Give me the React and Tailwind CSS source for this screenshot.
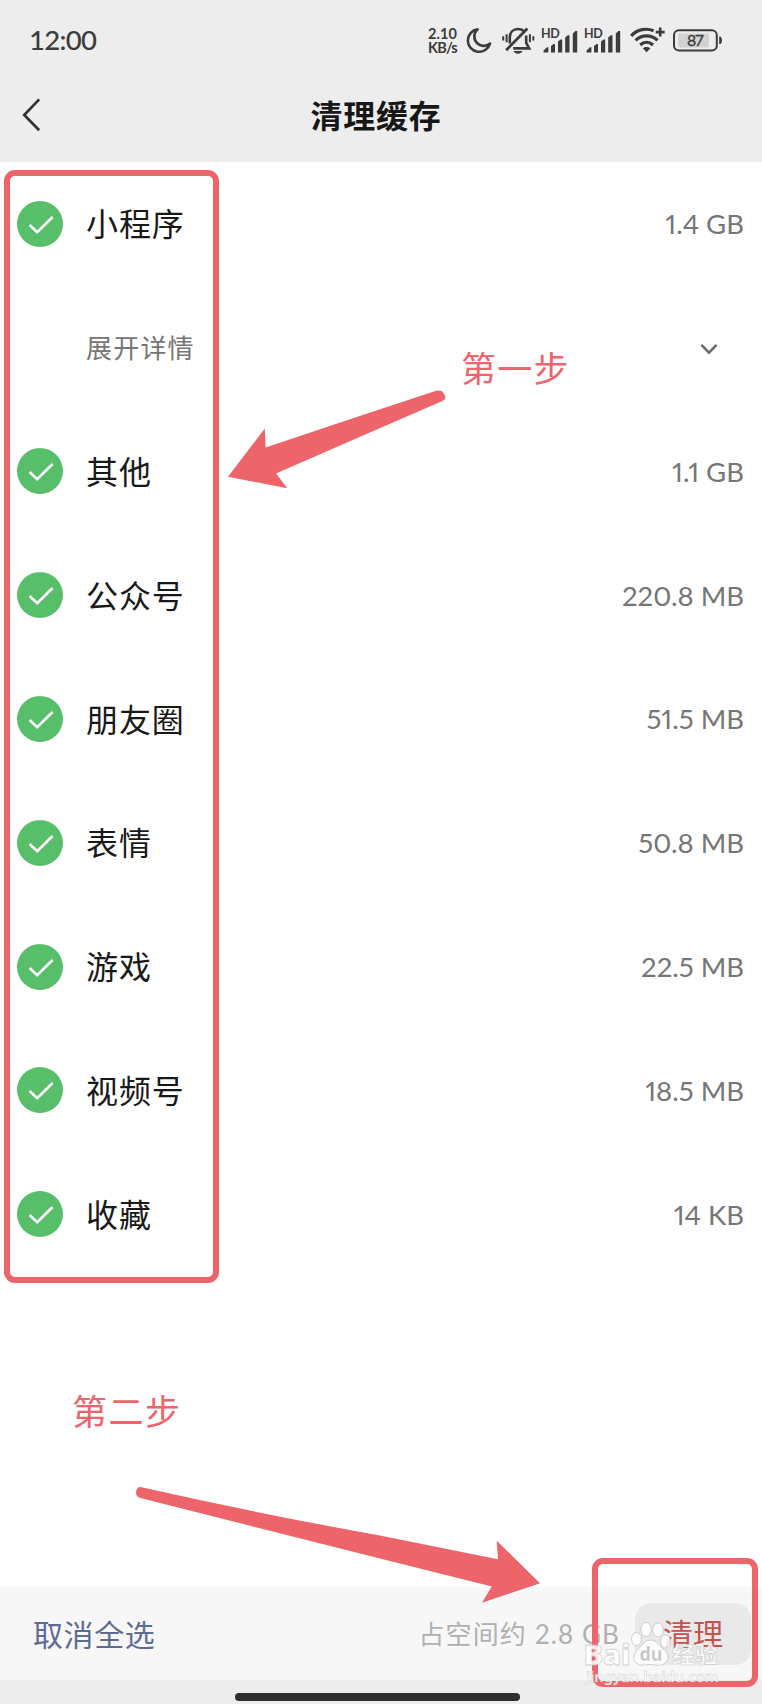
import React, { useState } from 'react';

const cacheItems = [
  { id: 'mini', name: '小程序', size: '1.4 GB', expandable: true },
  { id: 'other', name: '其他', size: '1.1 GB' },
  { id: 'official', name: '公众号', size: '220.8 MB' },
  { id: 'moments', name: '朋友圈', size: '51.5 MB' },
  { id: 'sticker', name: '表情', size: '50.8 MB' },
  { id: 'game', name: '游戏', size: '22.5 MB' },
  { id: 'channels', name: '视频号', size: '18.5 MB' },
  { id: 'favorites', name: '收藏', size: '14 KB' },
];

const MoonIcon = () => (
  <svg width="26" height="27" viewBox="0 0 26 27" fill="none" stroke="#3c3c3c" strokeWidth="2.6" strokeLinejoin="round">
    <path d="M11.6 2.3 A11.3 11.3 0 1 0 24 16.6 A8.8 8.8 0 0 1 11.6 2.3 Z" />
  </svg>
);

const MutedBellIcon = () => (
  <svg width="33" height="28" viewBox="0 0 33 28" fill="none" stroke="#3c3c3c" strokeWidth="2.6">
    <path d="M7.8 16.5 V10.6 C7.8 5.6 11 2 16 2 C18.2 2 20.2 2.7 21.8 4" />
    <path d="M24.2 8.4 V16 L27.2 21.4 H11.2" />
    <path d="M4.2 23.2 L25.4 1.6" strokeWidth="2.8" />
    <path d="M4.6 7.2 V15.2 M1.2 9.2 V13.4 M27.9 7.2 V15.2 M31.3 9.2 V13.4" strokeWidth="2" />
    <path d="M11.5 24 H20.5 C19 27.6 13 27.6 11.5 24 Z" fill="#3c3c3c" stroke="none" />
  </svg>
);

const SignalIcon = () => (
  <div className="relative h-[26px] w-[37px]">
    <span className="absolute -top-[2px] -left-px text-[12.5px] leading-[14px] font-bold tracking-[-0.4px]">HD</span>
    <svg width="37" height="26" viewBox="0 0 37 26" fill="#3c3c3c">
      <path d="M1.6 23.6 V21.6 L5 18.2 H6.4 V23.6 Z" />
      <path d="M9 23.6 V17 L11.6 15 H13 V23.6 Z" />
      <path d="M16 23.6 V12.6 L18.6 10.4 H20.2 V23.6 Z" />
      <path d="M23.2 23.6 V8.6 L25.8 6.2 H27.5 V23.6 Z" />
      <path d="M30.8 23.6 V4.4 L33.4 2 H35.2 V23.6 Z" />
    </svg>
  </div>
);

const WifiIcon = () => (
  <svg width="36" height="26" viewBox="0 0 36 26" fill="none" stroke="#3c3c3c" strokeWidth="3.2">
    <path d="M1.2 8.8 C7.4 2 16.6 0.8 23.6 3.8" />
    <path d="M5.6 13.4 C11.6 7.4 21.2 7.4 27.6 13.4" />
    <path d="M10.2 18 C14 14.6 19.2 14.6 23 18" />
    <path d="M16.6 25.2 L12.9 21.4 C15 19.6 18.2 19.6 20.3 21.4 Z" fill="#3c3c3c" stroke="none" />
    <path d="M30.2 0.6 V9.6 M25.7 5.1 H34.7" strokeWidth="2.6" />
  </svg>
);

const BatteryIcon = () => (
  <svg width="50" height="24" viewBox="0 0 50 24">
    <rect x="1" y="1.2" width="42.8" height="20.4" rx="5" fill="none" stroke="#3c3c3c" strokeWidth="2" />
    <rect x="5" y="4.4" width="31" height="14" rx="2" fill="#d2d2d2" />
    <path d="M46.2 7.6 H47.4 Q49 8.6 49 11.3 Q49 14 47.4 15 H46.2 Z" fill="#3c3c3c" />
    <text x="22.6" y="17.2" textAnchor="middle" fontSize="16" stroke="#3c3c3c" strokeWidth="0.3" fill="#3c3c3c" textLength="17">87</text>
  </svg>
);

const StatusBar = () => (
  <div className="flex h-[81px] items-start justify-between pl-[29px] pr-[39px] text-[#3c3c3c]">
    <span className="mt-[23px] text-[27.5px] leading-[34px] font-medium tracking-[-0.7px]">12:00</span>
    <div className="flex items-start pt-[27px]">
      <div className="mr-[9px] w-[29px] text-[14.5px] leading-[14px] font-bold whitespace-nowrap">
        <p className="tracking-[0.1px]">2.10</p>
        <p className="tracking-[-0.8px]">KB/s</p>
      </div>
      <div className="mr-[10px]"><MoonIcon /></div>
      <div className="mr-[7px]"><MutedBellIcon /></div>
      <div className="mt-[2px] mr-[6px]"><SignalIcon /></div>
      <div className="mt-[2px] mr-[8px]"><SignalIcon /></div>
      <div className="mr-[7px]"><WifiIcon /></div>
      <div className="mt-[2px]"><BatteryIcon /></div>
    </div>
  </div>
);

const TitleBar = () => (
  <div className="grid h-[81px] grid-cols-[1fr_auto_1fr] items-start pr-[32px] pl-[22px]">
    <button className="mt-[16px]" aria-label="返回">
      <svg width="20" height="36" viewBox="0 0 20 36" fill="none" stroke="#333" strokeWidth="2.7">
        <path d="M17.2 2.4 L2.2 18 L17.2 33.2" />
      </svg>
    </button>
    <h1 className="mt-[12px] text-[32px] leading-[46px] font-bold tracking-[0.8px] text-[#171717]">清理缓存</h1>
  </div>
);

const CheckCircle = ({ checked, onClick }) => (
  <button onClick={onClick} className="flex size-[46px] items-center justify-center rounded-full bg-[#57be6a]">
    {checked && (
      <svg width="26" height="20" viewBox="0 0 26 20" className="mt-[2px] ml-px" fill="none" stroke="#fff" strokeWidth="2.7">
        <path d="M1.6 10 L9.2 17.2 L24.6 2" />
      </svg>
    )}
  </button>
);

const CacheRow = ({ item, checked, onToggle }) => (
  <>
    <li className="flex h-[123.8px] items-center pr-[18px] pl-[17px]">
      <CheckCircle checked={checked} onClick={onToggle} />
      <span className="ml-[23px] pt-px text-[32px] tracking-[0.9px] text-[#191919]">{item.name}</span>
      <span className="ml-auto text-[27.5px] text-[#767676] proportional-nums">{item.size}</span>
    </li>
    {item.expandable && (
      <li className="flex h-[123.8px] items-center justify-between pt-[2px] pr-[44px] pl-[86px]">
        <span className="text-[26px] tracking-[1.2px] text-[#767676]">展开详情</span>
        <svg width="18" height="12" viewBox="0 0 18 12" fill="none" stroke="#6b6b6b" strokeWidth="2.5">
          <path d="M1.4 1.8 L9 9.6 L16.6 1.8" />
        </svg>
      </li>
    )}
  </>
);

const BottomBar = ({ onToggleAll }) => (
  <div className="flex h-[93px] items-center bg-[#f7f7f7] pr-[11px] pl-[33px]">
    <button onClick={onToggleAll} className="pt-[2px] text-[30px] tracking-[0.6px] text-[#5d6c93]">取消全选</button>
    <span className="ml-auto pt-[2px] text-[26px] tracking-[1.1px] text-[#b0b0b0]">占空间约 2.8 GB</span>
    <button className="ml-[15px] h-[62px] w-[116px] rounded-2xl bg-[#e9e9e9] text-[30px] text-[#c4534f]">清理</button>
  </div>
);

// Hand drawn marks that explain the two steps
const Annotations = () => (
  <div className="pointer-events-none absolute inset-0">
    <div className="absolute top-[170px] left-[4px] h-[1113px] w-[215px] rounded-[11px] border-6 border-[#ed646b]" />
    <div className="absolute top-[1558px] left-[592px] h-[129px] w-[166px] rounded-[11px] border-6 border-[#ed646b]" />
    <span className="absolute top-[343px] left-[461px] text-[35px] leading-[50px] tracking-[1.2px] whitespace-nowrap text-[#ed646b]">第一步</span>
    <span className="absolute top-[1386px] left-[72px] text-[35px] leading-[50px] tracking-[1.5px] whitespace-nowrap text-[#ed646b]">第二步</span>
    <svg className="absolute inset-0" width="762" height="1704" viewBox="0 0 762 1704" fill="#ed646b">
      <path d="M228 476.7 L264.8 428.5 L265.6 447.4 Q350 419 434.7 391.2 Q441 389.2 443.5 393 Q447 398 444 400 Q442 401.4 437.8 403 Q357 438 276 473.5 L287.4 488.3 Z" />
      <path d="M540 1583.3 L496.7 1540.7 L498 1559.3 L381 1535.7 Q260 1514 140.5 1487 Q137.5 1486.6 136.3 1491 Q134.5 1496.5 142.5 1498.6 L381 1558.8 L491.8 1586.6 L482 1602.7 Z" />
    </svg>
  </div>
);

const Watermark = () => (
  <svg
    className="pointer-events-none absolute top-[1610px] left-[580px]"
    width="150"
    height="84"
    viewBox="0 0 150 84"
    fill="#fff"
    fillOpacity="0.85"
    stroke="#c4c4c4"
    strokeOpacity="0.8"
    strokeWidth="1"
    fontFamily='"Noto Sans", "Noto Sans CJK SC", sans-serif'
  >
    <text x="3.5" y="54.5" fontSize="29" fontWeight="900" strokeWidth="0.8" textLength="47" lengthAdjust="spacingAndGlyphs">Bai</text>
    <ellipse cx="56.5" cy="29" rx="5" ry="6.6" />
    <ellipse cx="66" cy="19.5" rx="5.2" ry="7" />
    <ellipse cx="78" cy="20" rx="5.2" ry="7" />
    <ellipse cx="85.5" cy="31.5" rx="5" ry="6.6" />
    <path d="M71 30 C77 30 79 36 83 39 C89 43 90 50 84 54 C79 56.5 75 54.5 70 54.5 C65 54.5 61 56.5 56 53 C52 49 54 43 58 39 C63 35 65 30 71 30 Z" />
    <text x="59.5" y="51" fontSize="20" fontWeight="700" fill="#b8b8b8" stroke="#fff" strokeWidth="0.4" textLength="23" lengthAdjust="spacingAndGlyphs">du</text>
    <text x="92" y="53" fontSize="23" fontWeight="700" strokeWidth="0.6" textLength="46" lengthAdjust="spacingAndGlyphs">经验</text>
    <text x="6" y="72" fontSize="15" fontWeight="600" strokeWidth="0.5" textLength="133" lengthAdjust="spacingAndGlyphs">jingyan.baidu.com</text>
  </svg>
);

export default function App() {
  const [selected, setSelected] = useState(cacheItems.map((item) => item.id));

  const toggle = (id) => {
    setSelected((prev) => (prev.includes(id) ? prev.filter((s) => s !== id) : [...prev, id]));
  };

  const toggleAll = () => {
    setSelected((prev) => (prev.length ? [] : cacheItems.map((item) => item.id)));
  };

  return (
    <div className="relative flex h-[1704px] w-[762px] flex-col overflow-hidden bg-white font-['Lato','Noto_Sans_CJK_SC',sans-serif]">
      <header className="bg-[#ededed]">
        <StatusBar />
        <TitleBar />
      </header>

      <ul className="flex-1">
        {cacheItems.map((item) => (
          <CacheRow key={item.id} item={item} checked={selected.includes(item.id)} onToggle={() => toggle(item.id)} />
        ))}
      </ul>

      <BottomBar onToggleAll={toggleAll} />
      <div className="flex h-[24px] justify-center bg-[#ededed] pt-[13px] pr-[7px]">
        <div className="h-[8px] w-[285px] rounded-full bg-[#2f2f2f]" />
      </div>

      <Annotations />
      <Watermark />
    </div>
  );
}
